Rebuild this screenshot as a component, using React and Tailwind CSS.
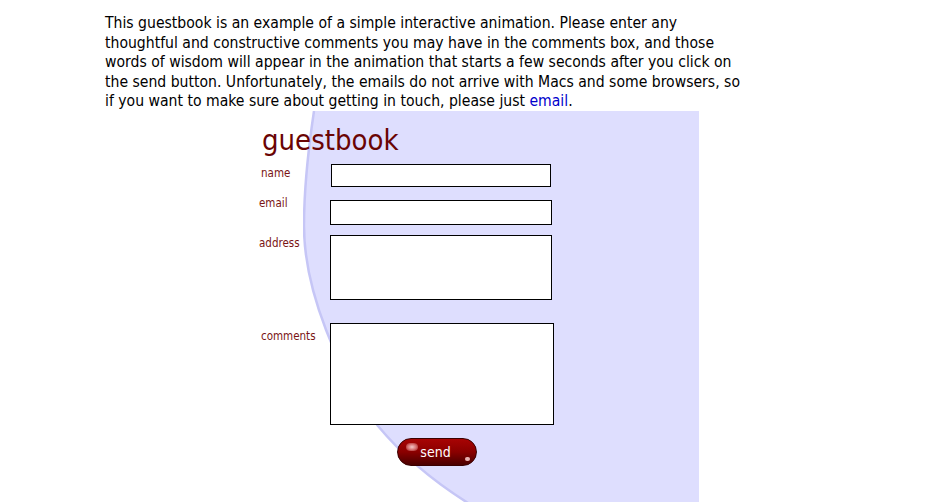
import React from 'react';

const font = { fontFamily: '"DejaVu Sans Condensed", "DejaVu Sans", Tahoma, sans-serif' };

// lavender backdrop with a soft curved left edge
const Backdrop = () => (
  <svg className="absolute left-[44px] top-0" width="396" height="392" viewBox="0 0 396 392">
    <path
      d="M11,0 C5,40 1,80 1,115 C1,180 35,260 75,315 C100,345 130,370 165,392 L175,400 L396,400 L396,0 Z"
      fill="#dedefe"
    />
    <path
      d="M11,0 C5,40 1,80 1,115 C1,180 35,260 75,315 C100,345 130,370 165,392 L175,400"
      fill="none"
      stroke="#c6c6f6"
      strokeWidth="2.5"
    />
  </svg>
);

const Field = ({ label, labelClass, boxClass, multiline }) => (
  <div className="flex">
    <div className={`w-[71px] shrink-0 text-[11.5px] leading-[13px] text-[#7a1414] ${labelClass}`}>{label}</div>
    {multiline ? (
      <textarea className={`border border-black bg-white resize-none outline-none ${boxClass}`} />
    ) : (
      <input className={`border border-black bg-white outline-none ${boxClass}`} />
    )}
  </div>
);

const SendButton = () => (
  <button className="relative w-[80px] h-[28px] rounded-full border border-[#3a0000] bg-linear-to-b from-[#a80404] via-[#8a0000] to-[#4a0000] text-white text-[14px] leading-[26px] pr-[3px] overflow-hidden">
    <span className="absolute left-[8px] top-[4px] w-[12px] h-[8px] rounded-full bg-[radial-gradient(ellipse_at_center,#f4c8c8_0%,#d47070_50%,transparent_100%)]" />
    <span className="absolute right-[6px] bottom-[4px] w-[5px] h-[4px] rounded-full bg-[#e8b0b0]" />
    <span className="relative">send</span>
  </button>
);

export default function App() {
  return (
    <div className="w-[932px] h-[502px] overflow-hidden bg-white text-black pl-[105px] pt-[14px]" style={font}>
      <p className="text-[15.6px] leading-[19.5px] whitespace-nowrap">
        This guestbook is an example of a simple interactive animation. Please enter any<br />
        thoughtful and constructive comments you may have in the comments box, and those<br />
        words of wisdom will appear in the animation that starts a few seconds after you click on<br />
        the send button. Unfortunately, the emails do not arrive with Macs and some browsers, so<br />
        if you want to make sure about getting in touch, please just{' '}
        <a href="#" className="text-[#0000cc]">email</a>.
      </p>

      <div className="relative -mt-[1px] ml-[154px] w-[440px] h-[392px]">
        <Backdrop />
        <form className="relative flex flex-col" onSubmit={(e) => e.preventDefault()}>
          <h1 className="text-[29px] leading-[30px] text-[#6a0404] pl-[3px] pt-[14px] h-[53px]">guestbook</h1>
          <Field label="name" labelClass="pl-[2px] mt-[3px]" boxClass="ml-[1px] w-[220px] h-[23px]" />
          <div className="mt-[13px]">
            <Field label="email" labelClass="-mt-[3px]" boxClass="w-[222px] h-[25px]" />
          </div>
          <div className="mt-[10px]">
            <Field label="address" labelClass="mt-[2px]" multiline boxClass="w-[222px] h-[65px]" />
          </div>
          <div className="mt-[23px]">
            <Field label="comments" labelClass="pl-[2px] mt-[7px]" multiline boxClass="w-[224px] h-[102px]" />
          </div>
          <div className="mt-[13px] pl-[138px]">
            <SendButton />
          </div>
        </form>
      </div>
    </div>
  );
}
